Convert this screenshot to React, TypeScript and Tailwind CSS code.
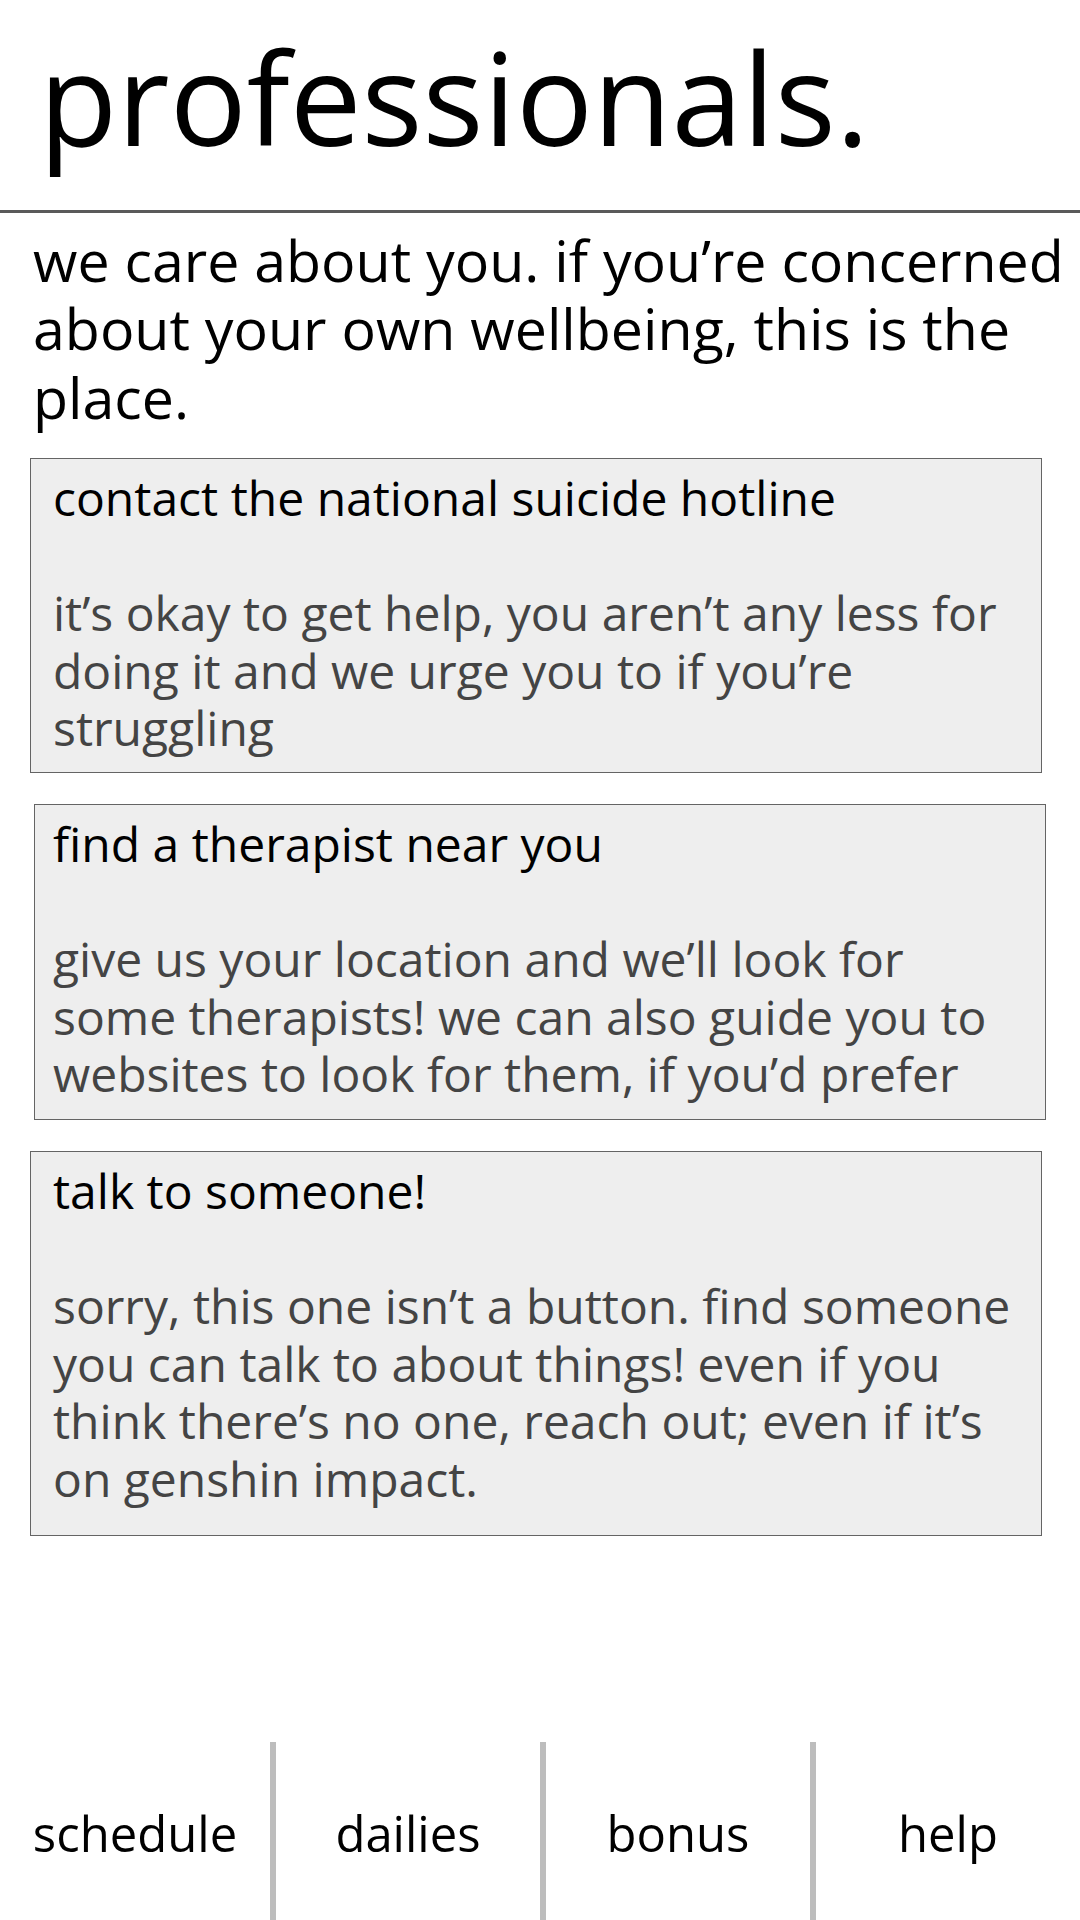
const cards = [
  {
    id: "hotline",
    title: "contact the national suicide hotline",
    body: "it’s okay to get help, you aren’t any less for doing it and we urge you to if you’re struggling",
    box: "ml-[30px] pl-[22px] pb-[15px]",
  },
  {
    id: "therapist",
    title: "find a therapist near you",
    body: "give us your location and we’ll look for some therapists! we can also guide you to websites to look for them, if you’d prefer",
    box: "ml-[34px] pl-[18px] pb-[16px]",
  },
  {
    id: "talk",
    title: "talk to someone!",
    body: "sorry, this one isn’t a button. find someone you can talk to about things! even if you think there’s no one, reach out; even if it’s on genshin impact.",
    box: "ml-[30px] pl-[22px] pb-[28px]",
  },
];

const tabs = ["schedule", "dailies", "bonus", "help"];

export default function App() {
  return (
    <div className="min-h-screen flex flex-col bg-white text-black font-['Open_Sans',sans-serif] leading-[1.2]">
      {/* Header */}
      <div className="pt-[20px] pb-[36px] pl-[39px]">
        <h1 className="text-[128px] leading-[1.2] font-normal">professionals.</h1>
      </div>
      <div className="h-[3px] bg-[#5a5a5a]" />

      <p className="mt-[13px] pl-[33px] pr-[2px] text-[57.3px] leading-[1.2]">
        we care about you. if you’re concerned about your own wellbeing, this is the place.
      </p>

      {/* Cards */}
      <div className="mt-[26px] flex flex-col gap-[31px]">
        {cards.map((card) => (
          <div
            key={card.id}
            className={`w-[1012px] border border-[#646464] bg-[#eeeeee] pt-[10px] pr-[10px] text-[48px] leading-[1.2] ${card.box}`}
          >
            <div>{card.title}</div>
            <div className="h-[57.6px]" />
            <div className="text-[#444444]">{card.body}</div>
          </div>
        ))}
      </div>

      {/* Bottom nav */}
      <nav className="mt-auto grid grid-cols-4 h-[178px]">
        {tabs.map((t, i) => (
          <div
            key={t}
            className={`flex items-center justify-center pt-[4px] text-[49px] ${i > 0 ? "border-l-[6px] border-[#bdbdbd]" : ""}`}
          >
            {t}
          </div>
        ))}
      </nav>
    </div>
  );
}
